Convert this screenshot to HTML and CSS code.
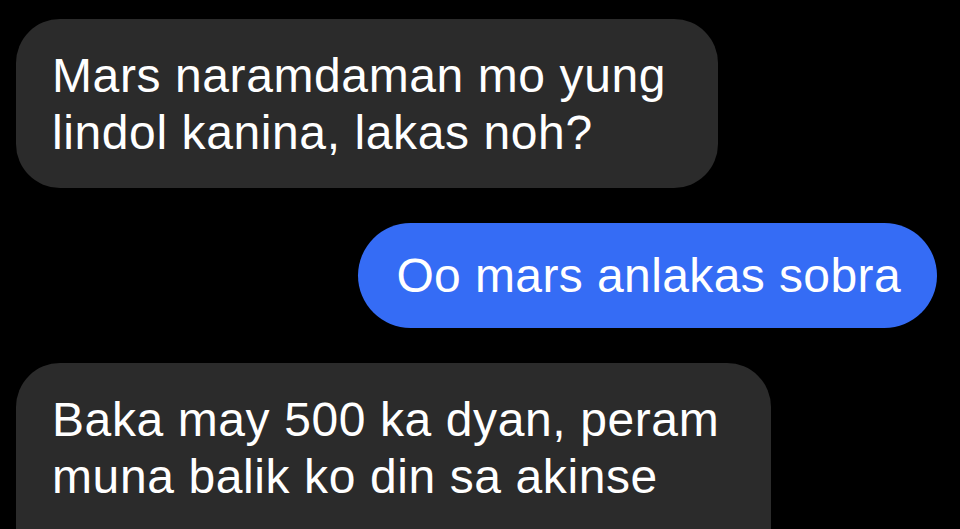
FILE: index.html
```html
<!DOCTYPE html>
<html>
<head>
<meta charset="utf-8">
<link rel="stylesheet" href="styles.css">
</head>
<body>
<div class="chat">
  <div class="bubble in first">Mars naramdaman mo yung<br>lindol kanina, lakas noh?</div>
  <div class="bubble out">Oo mars anlakas sobra</div>
  <div class="bubble in third">Baka may 500 ka dyan, peram<br>muna balik ko din sa akinse</div>
</div>
</body>
</html>
```
FILE: styles.css
```css
html, body {
  margin: 0;
  padding: 0;
  background: #000;
  height: 100%;
  overflow: hidden;
}
.chat {
  display: flex;
  flex-direction: column;
  gap: 35px;
  padding: 19px 23px 0 16px;
  font-family: "Liberation Sans", Arial, sans-serif;
  font-size: 48px;
  line-height: 57px;
  letter-spacing: 0.6px;
  color: #fff;
}
.bubble {
  border-radius: 44px;
  white-space: nowrap;
}
.in {
  align-self: flex-start;
  background: #2b2b2b;
  padding: 27.5px 52px 27.5px 36px;
}
.out {
  align-self: flex-end;
  background: #356cf5;
  padding: 24px 36px 24px 38px;
  border-radius: 53px;
  letter-spacing: 0.4px;
}
.third {
  padding-bottom: 70px;
}
```
